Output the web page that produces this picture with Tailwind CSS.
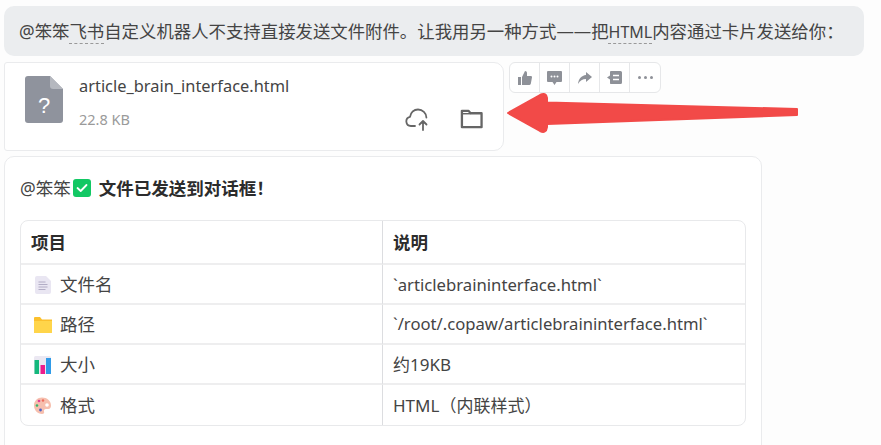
<!doctype html>
<html lang="zh">
<head>
<meta charset="utf-8">
<title>article_brain_interface</title>
<script src="https://cdn.jsdelivr.net/npm/@tailwindcss/browser@4"></script>
</head>
<body class="bg-[#fdfdfd] overflow-hidden">
<div class="relative w-[881px] h-[445px] overflow-hidden pt-[6px] pl-[4px] text-[17.500px] text-[#333] font-['Noto_Sans','Noto_Sans_CJK_SC',sans-serif]">

  <!-- message bubble -->
  <div class="w-[860px] h-[50px] rounded-[10px] bg-[#ebedef] pl-[15px] flex items-center leading-[24px] text-[17.400px] whitespace-nowrap text-[#444]">
    <span>@笨笨<span class="underline decoration-dashed decoration-1 decoration-[#999] underline-offset-[5px]">飞书</span>自定义机器人不支持直接发送文件附件。让我用另一种方式——把<span class="text-[16px] underline decoration-dashed decoration-1 decoration-[#999] underline-offset-[5px]">HTML</span>内容通过卡片发送给你：</span>
  </div>

  <!-- file card + actions -->
  <div class="flex items-start mt-[6px]">
    <div class="w-[500px] h-[89px] bg-white border border-[#eaebed] rounded-r-[10px] rounded-l-[3px] flex pl-[20px] pt-[11px] pr-[20px]">
      <svg class="w-[38px] h-[47px] mt-[2px]" viewBox="0 0 38 47">
        <path d="M3 0H25L38 13V44a3 3 0 0 1-3 3H3a3 3 0 0 1-3-3V3a3 3 0 0 1 3-3Z" fill="#8f939d"/>
        <path d="M25 0L38 13H28a3 3 0 0 1-3-3Z" fill="#b5b8bf"/>
        <text x="19" y="37" text-anchor="middle" font-size="22" fill="#fff" font-family="Liberation Sans">?</text>
      </svg>
      <div class="ml-[16px] flex-1">
        <div class="leading-[24px] text-[16.400px] text-[#444] h-[24px]">article_brain_interface.html</div>
        <div class="flex items-center justify-between mt-[8px] h-[26px]">
          <span class="text-[14.500px] text-[#9a9a9a] pt-[2px]">22.8 KB</span>
          <div class="flex items-center gap-[30px]">
            <svg class="w-[25px] h-[23px]" viewBox="0 0 25 23" fill="none" stroke="#666" stroke-width="1.800" stroke-linecap="round" stroke-linejoin="round">
              <path d="M10 18H6a4.600 4.600 0 0 1-1-9.100C5.700 4.400 9 1.500 13 1.500c4.600 0 8.300 3.500 8.400 8"/>
              <path d="M18 22V13M14.500 16.500L18 13l3.500 3.500"/>
            </svg>
            <svg class="w-[23px] h-[20px]" viewBox="0 0 24 20" fill="none" stroke="#666" stroke-width="2.400" stroke-linejoin="round">
              <path d="M2 18.500V1.500H9L11 4H22.500V18.500Z"/>
              <path d="M2 4.500H11" stroke-width="1.500"/>
            </svg>
          </div>
        </div>
      </div>
    </div>

    <div class="ml-[5px] h-[31px] flex bg-white border border-[#e6e7e9] rounded-[6px] divide-x divide-[#e6e7e9]">
      <div class="w-[30px] flex items-center justify-center">
        <svg class="w-[14px] h-[14px]" viewBox="0 0 14 14" fill="#8e9198"><path d="M0 6h3v8H0ZM4 6l3-6c1.200 0 2 .8 2 2v3h4c.7 0 1.100.6 1 1.300l-1.200 6.500c-.1.700-.7 1.200-1.300 1.200H4Z"/></svg>
      </div>
      <div class="w-[30px] flex items-center justify-center">
        <svg class="w-[15px] h-[14px]" viewBox="0 0 15 14"><path d="M1 0h13a1 1 0 0 1 1 1v9a1 1 0 0 1-1 1H9.500L7.500 14l-2-3H1a1 1 0 0 1-1-1V1a1 1 0 0 1 1-1Z" fill="#8e9198"/><circle cx="4.500" cy="5.500" r="1" fill="#fff"/><circle cx="7.500" cy="5.500" r="1" fill="#fff"/><circle cx="10.500" cy="5.500" r="1" fill="#fff"/></svg>
      </div>
      <div class="w-[30px] flex items-center justify-center">
        <svg class="w-[14px] h-[12px]" viewBox="0 0 14 12" fill="#8e9198"><path d="M8 0l6 5-6 5V7C4.500 7 2 8.500 0 12c.5-5 3.500-8.500 8-9Z"/></svg>
      </div>
      <div class="w-[30px] flex items-center justify-center">
        <svg class="w-[15px] h-[13px]" viewBox="0 0 15 13"><path d="M4 0h9.500A1.500 1.500 0 0 1 15 1.500v10a1.500 1.500 0 0 1-1.500 1.500H4a1 1 0 0 1-1-.5V8.500L0 6.500l3-2V1a1 1 0 0 1 1-1Z" fill="#8e9198"/><path d="M6 4.500h6M6 8.500h6" stroke="#fff" stroke-width="1.400"/></svg>
      </div>
      <div class="w-[30px] flex items-center justify-center gap-[3px]">
        <span class="w-[3px] h-[3px] rounded-full bg-[#8e9198]"></span>
        <span class="w-[3px] h-[3px] rounded-full bg-[#8e9198]"></span>
        <span class="w-[3px] h-[3px] rounded-full bg-[#8e9198]"></span>
      </div>
    </div>
  </div>

  <!-- result card -->
  <div class="mt-[5px] w-[758px] h-[320px] bg-white border border-[#eaebed] rounded-t-[10px] rounded-bl-[3px] pl-[15px] pt-[19px]">
    <div class="h-[24px] flex items-center leading-[24px] whitespace-nowrap">
      <span class="text-[#444]">@笨笨</span>
      <svg class="w-[18px] h-[18px] ml-[2px]" viewBox="0 0 18 18">
        <rect width="18" height="18" rx="3" fill="#12c864"/>
        <path d="M4.500 9l3.200 3 5.800-6" fill="none" stroke="#fff" stroke-width="1.800" stroke-linecap="round" stroke-linejoin="round"/>
      </svg>
      <span class="ml-[8px] font-bold text-[#2c2c2c]">文件已发送到对话框！</span>
    </div>

    <table class="mt-[20px] w-[726px] h-[206px] border-separate border-spacing-0 border border-[#e8e9eb] rounded-[8px] text-left">
      <thead>
        <tr class="h-[44px]">
          <th class="w-[362px] pl-[10px] font-bold text-[#2c2c2c] border-r border-b-2 border-r-[#dcdde0] border-b-[#eeeeef]">项目</th>
          <th class="pl-[10px] font-bold text-[#2c2c2c] border-b-2 border-b-[#eeeeef]">说明</th>
        </tr>
      </thead>
      <tbody class="text-[#444]">
        <tr class="h-[40px]">
          <td class="pl-[13px] pt-[1px] border-r border-b-2 border-r-[#dcdde0] border-b-[#eeeeef]">
            <div class="flex items-center">
              <svg class="w-[16px] h-[18px] ml-[1px]" viewBox="0 0 16 18">
                <path d="M2 0H11L16 5V16a2 2 0 0 1-2 2H2a2 2 0 0 1-2-2V2a2 2 0 0 1 2-2Z" fill="#e9e6f2"/>
                <path d="M3.500 6h7M3.500 8.500h9M3.500 11h9M3.500 13.500h7" stroke="#aba6c0" stroke-width=".9"/>
              </svg>
              <span class="ml-[9px]">文件名</span>
            </div>
          </td>
          <td class="pl-[10px] pt-[1px] text-[16.700px] border-b-2 border-b-[#eeeeef]">`articlebraininterface.html`</td>
        </tr>
        <tr class="h-[40px]">
          <td class="pl-[13px] pt-[1px] border-r border-b-2 border-r-[#dcdde0] border-b-[#eeeeef]">
            <div class="flex items-center">
              <svg class="w-[18px] h-[17px]" viewBox="0 0 18 17">
                <path d="M0 2a1 1 0 0 1 1-1H6L8 3.500H18V16a1 1 0 0 1-1 1H1a1 1 0 0 1-1-1Z" fill="#fbc02d"/>
                <path d="M0 5H18V16a1 1 0 0 1-1 1H1a1 1 0 0 1-1-1Z" fill="#ffd54a"/>
              </svg>
              <span class="ml-[8px]">路径</span>
            </div>
          </td>
          <td class="pl-[10px] pt-[1px] text-[16.650px] border-b-2 border-b-[#eeeeef]">`/root/.copaw/articlebraininterface.html`</td>
        </tr>
        <tr class="h-[40px]">
          <td class="pl-[13px] pt-[1px] border-r border-b-2 border-r-[#dcdde0] border-b-[#eeeeef]">
            <div class="flex items-center">
              <svg class="w-[17px] h-[18px]" viewBox="0 0 17 18">
                <rect width="17" height="18" rx="1.500" fill="#ebe8f2"/>
                <rect x="0.500" y="4" width="4.500" height="14" fill="#14b87c"/>
                <rect x="6.500" y="9" width="4.500" height="9" fill="#ec1c8c"/>
                <rect x="12" y="2" width="5" height="16" fill="#2f9be8"/>
              </svg>
              <span class="ml-[9px]">大小</span>
            </div>
          </td>
          <td class="pl-[10px] pt-[1px] text-[17px] border-b-2 border-b-[#eeeeef]">约19KB</td>
        </tr>
        <tr class="h-[40px]">
          <td class="pl-[13px] pt-[1px] border-r border-r-[#dcdde0]">
            <div class="flex items-center">
              <svg class="w-[17px] h-[17px]" viewBox="0 0 17 17">
                <path d="M8 0.500C3.500 0.500 0 4 0 8.500S3.500 17 8 17c2 0 2.500-1 2-2.500-.5-1.500.5-2.500 2-2.500h2.500C16 12 17 10.500 17 8.500 17 4 13 0.500 8 0.500Z" fill="#f6bfae"/>
                <circle cx="13" cy="8" r="1.800" fill="#fff"/>
                <circle cx="5" cy="4" r="1.300" fill="#e0409a"/>
                <circle cx="9" cy="3.500" r="1.200" fill="#ef6a5a"/>
                <circle cx="3" cy="8.500" r="1.300" fill="#35b36b"/>
                <circle cx="6.500" cy="13" r="1.400" fill="#4a62c8"/>
              </svg>
              <span class="ml-[9px]">格式</span>
            </div>
          </td>
          <td class="pl-[10px] pt-[1px] text-[17px]">HTML（内联样式）</td>
        </tr>
      </tbody>
    </table>
  </div>

  <!-- annotation arrow drawn over the screenshot -->
  <svg class="absolute left-[500px] top-[85px] w-[310px] h-[55px]" viewBox="0 0 310 55">
    <path d="M8 28L40 10Q46 7 47 13L47 17.500L297 24V30L47 39L47 42Q46 49 40 46Z" fill="#f24a48" stroke="#f24a48" stroke-width="2" stroke-linejoin="round"/>
  </svg>
</div>
</body>
</html>
